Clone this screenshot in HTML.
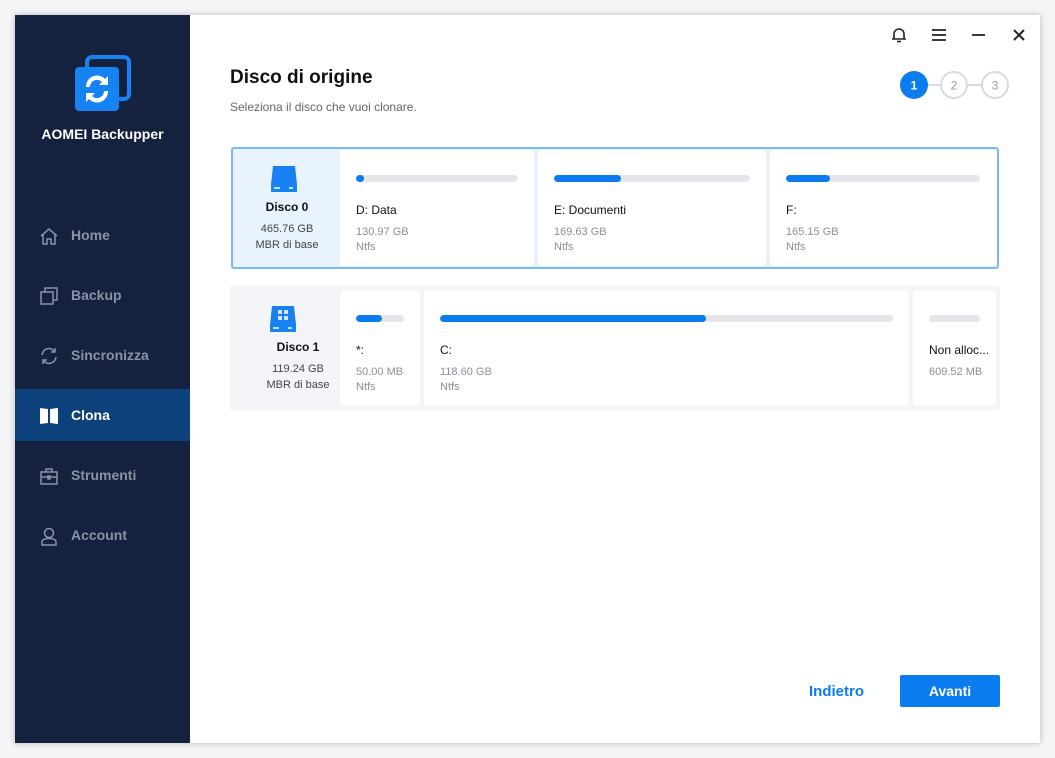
<!DOCTYPE html>
<html><head><meta charset="utf-8"><style>
*{margin:0;padding:0;box-sizing:border-box}
body{width:1055px;height:758px;background:#f4f5f7;font-family:"Liberation Sans",sans-serif;position:relative;overflow:hidden}
.win{position:absolute;left:15px;top:15px;width:1025px;height:728px;background:#fff;box-shadow:0 0 6px rgba(0,0,0,.25)}
.side{position:absolute;left:0;top:0;width:175px;height:728px;background:#14213f}
.logo{position:absolute;left:58px;top:40px}
.brand{position:absolute;left:0;width:175px;top:111px;text-align:center;color:#fff;font-weight:bold;font-size:14px}
.nav{position:absolute;left:0;width:175px;height:52px;color:#8b93a6;font-size:14px;font-weight:bold;line-height:52px;padding-left:56px}
.nav svg{position:absolute;left:24px;top:17px}
.nav.act{background:#0d417c;color:#fff}
.abs{position:absolute}
.card{position:absolute;border-radius:3px}
.part{position:absolute;background:#fff;border-radius:3px}
.bar{position:absolute;left:16px;top:25px;height:7px;border-radius:4px;background:#e4e6ea;overflow:hidden}
.bar i{display:block;height:7px;background:#0a7cf0;border-radius:4px}
.pn{position:absolute;left:16px;top:53px;font-size:12px;color:#111}
.ps{position:absolute;left:16px;top:75px;font-size:11px;color:#8a8f99;line-height:15px}
.dk{position:absolute;text-align:center;width:108px;font-size:11px;color:#444;line-height:16px}
</style></head><body>
<div class="win">
<div class="side">
<svg class="logo" width="58" height="58" viewBox="0 0 58 58"><rect x="14" y="2" width="42" height="42" rx="5" fill="none" stroke="#1583f2" stroke-width="4"/><rect x="2" y="12" width="44" height="44" rx="4" fill="#1583f2"/><path d="M13 32a11 11 0 0 1 19-8l3-3v9h-9l3-3a7 7 0 0 0-12 5z" fill="#fff"/><path d="M35 36a11 11 0 0 1-19 8l-3 3v-9h9l-3 3a7 7 0 0 0 12-5z" fill="#fff"/></svg>
<div class="brand">AOMEI Backupper</div>
<div class="nav" style="top:194px"><svg width="20" height="20" viewBox="0 0 20 20" fill="none" stroke="#8b93a6" stroke-width="1.5"><path d="M2 10L10 3l8 7M4 8v10h4v-5h4v5h4V8"/></svg>Home</div>
<div class="nav" style="top:254px"><svg width="20" height="20" viewBox="0 0 20 20" fill="none" stroke="#8b93a6" stroke-width="1.5"><rect x="2" y="6" width="12" height="12"/><path d="M6 6V2h12v12h-4"/></svg>Backup</div>
<div class="nav" style="top:314px"><svg width="20" height="20" viewBox="0 0 20 20" fill="none" stroke="#8b93a6" stroke-width="1.5"><path d="M3 9a7 7 0 0 1 13-3M17 11a7 7 0 0 1-13 3M16 2v4h-4M4 18v-4h4"/></svg>Sincronizza</div>
<div class="nav act" style="top:374px"><svg width="20" height="20" viewBox="0 0 20 20" fill="#fff"><path d="M1 2l8 1v14l-8 1zM19 2l-8 1v14l8 1z"/></svg>Clona</div>
<div class="nav" style="top:434px"><svg width="20" height="20" viewBox="0 0 20 20" fill="none" stroke="#8b93a6" stroke-width="1.5"><rect x="2" y="6" width="16" height="12"/><path d="M7 6V3h6v3M2 11h16M9 10h2v3H9z"/></svg>Strumenti</div>
<div class="nav" style="top:494px"><svg width="20" height="20" viewBox="0 0 20 20" fill="none" stroke="#8b93a6" stroke-width="1.5"><circle cx="10" cy="7" r="4.5"/><path d="M3 19v-3c0-2 2-3.5 7-3.5s7 1.5 7 3.5v3z"/></svg>Account</div>
</div>
<svg class="abs" style="left:876px;top:12px" width="16" height="16" viewBox="0 0 16 16" fill="none" stroke="#222" stroke-width="1.6"><path d="M3 12V7a5 5 0 0 1 10 0v5zM1 12h14M6 14.5h4"/></svg>
<svg class="abs" style="left:917px;top:13px" width="14" height="14" viewBox="0 0 14 14" stroke="#222" stroke-width="1.8"><path d="M0 2h14M0 7h14M0 12h14"/></svg>
<svg class="abs" style="left:956px;top:13px" width="14" height="14" stroke="#222" stroke-width="1.8"><path d="M1 7h13"/></svg>
<svg class="abs" style="left:997px;top:13px" width="14" height="14" stroke="#222" stroke-width="2"><path d="M2 2l10 10M12 2L2 12"/></svg>
<div class="abs" style="left:215px;top:52px;font-size:19px;font-weight:bold;color:#111">Disco di origine</div>
<div class="abs" style="left:215px;top:85px;font-size:12px;color:#666">Seleziona il disco che vuoi clonare.</div>
<svg class="abs" style="left:884px;top:55px" width="112" height="30"><path d="M28 15h14M68 15h14" stroke="#d5dbe5" stroke-width="2"/><circle cx="15" cy="15" r="14" fill="#0a7cf0"/><circle cx="55" cy="15" r="13" fill="#fff" stroke="#d5dbe5" stroke-width="2"/><circle cx="96" cy="15" r="13" fill="#fff" stroke="#d5dbe5" stroke-width="2"/><text x="15" y="19.5" font-size="12" fill="#fff" text-anchor="middle" font-weight="bold" font-family="Liberation Sans">1</text><text x="55" y="19.5" font-size="12" fill="#999" text-anchor="middle" font-family="Liberation Sans">2</text><text x="96" y="19.5" font-size="12" fill="#999" text-anchor="middle" font-family="Liberation Sans">3</text></svg>

<div class="card" style="left:216px;top:132px;width:768px;height:122px;background:#e8f3fe;border:2px solid #78b8f7">
<svg class="abs" style="left:36px;top:14px" width="30" height="30" viewBox="0 0 30 30"><path d="M4 3h22l2 19H2z" fill="#1a7ff0"/><rect x="2" y="20" width="26" height="9" rx="1" fill="#1583f2"/><path d="M5 25h6M20 25h4" stroke="#fff" stroke-width="1.5"/></svg>
<div class="dk" style="left:0;top:50px;font-size:12px;color:#111;font-weight:bold">Disco 0</div>
<div class="dk" style="left:0;top:72px">465.76 GB<br>MBR di base</div>
<div class="part" style="left:107px;top:1px;width:194px;height:116px"><div class="bar" style="width:162px"><i style="width:8px"></i></div><div class="pn">D: Data</div><div class="ps">130.97 GB<br>Ntfs</div></div>
<div class="part" style="left:305px;top:1px;width:228px;height:116px"><div class="bar" style="width:196px"><i style="width:67px"></i></div><div class="pn">E: Documenti</div><div class="ps">169.63 GB<br>Ntfs</div></div>
<div class="part" style="left:537px;top:1px;width:227px;height:116px"><div class="bar" style="width:194px"><i style="width:44px"></i></div><div class="pn">F:</div><div class="ps">165.15 GB<br>Ntfs</div></div>
</div>

<div class="card" style="left:215px;top:271px;width:770px;height:124px;background:#f3f5f8">
<svg class="abs" style="left:38px;top:17px" width="30" height="30" viewBox="0 0 30 30"><path d="M4 3h22l2 19H2z" fill="#1a7ff0"/><rect x="2" y="20" width="26" height="9" rx="1" fill="#1583f2"/><path d="M5 25h6M20 25h4" stroke="#fff" stroke-width="1.5"/><path d="M10 7h4v4h-4zM16 7h4v4h-4zM10 13h4v4h-4zM16 13h4v4h-4z" fill="#cfe4fd"/></svg>
<div class="dk" style="left:14px;top:53px;font-size:12px;color:#111;font-weight:bold">Disco 1</div>
<div class="dk" style="left:14px;top:75px">119.24 GB<br>MBR di base</div>
<div class="part" style="left:110px;top:4px;width:80px;height:116px"><div class="bar" style="width:48px"><i style="width:26px"></i></div><div class="pn">*:</div><div class="ps">50.00 MB<br>Ntfs</div></div>
<div class="part" style="left:194px;top:4px;width:485px;height:116px"><div class="bar" style="width:453px"><i style="width:266px"></i></div><div class="pn">C:</div><div class="ps">118.60 GB<br>Ntfs</div></div>
<div class="part" style="left:683px;top:4px;width:83px;height:116px"><div class="bar" style="width:51px"><i style="width:0"></i></div><div class="pn">Non alloc...</div><div class="ps">609.52 MB</div></div>
</div>

<div class="abs" style="left:794px;top:668px;font-size:15px;font-weight:bold;color:#0a7cf0">Indietro</div>
<div class="abs" style="left:885px;top:660px;width:100px;height:32px;background:#0a7cf0;border-radius:2px;color:#fff;font-weight:bold;font-size:14px;text-align:center;line-height:32px">Avanti</div>
</div>
</body></html>
